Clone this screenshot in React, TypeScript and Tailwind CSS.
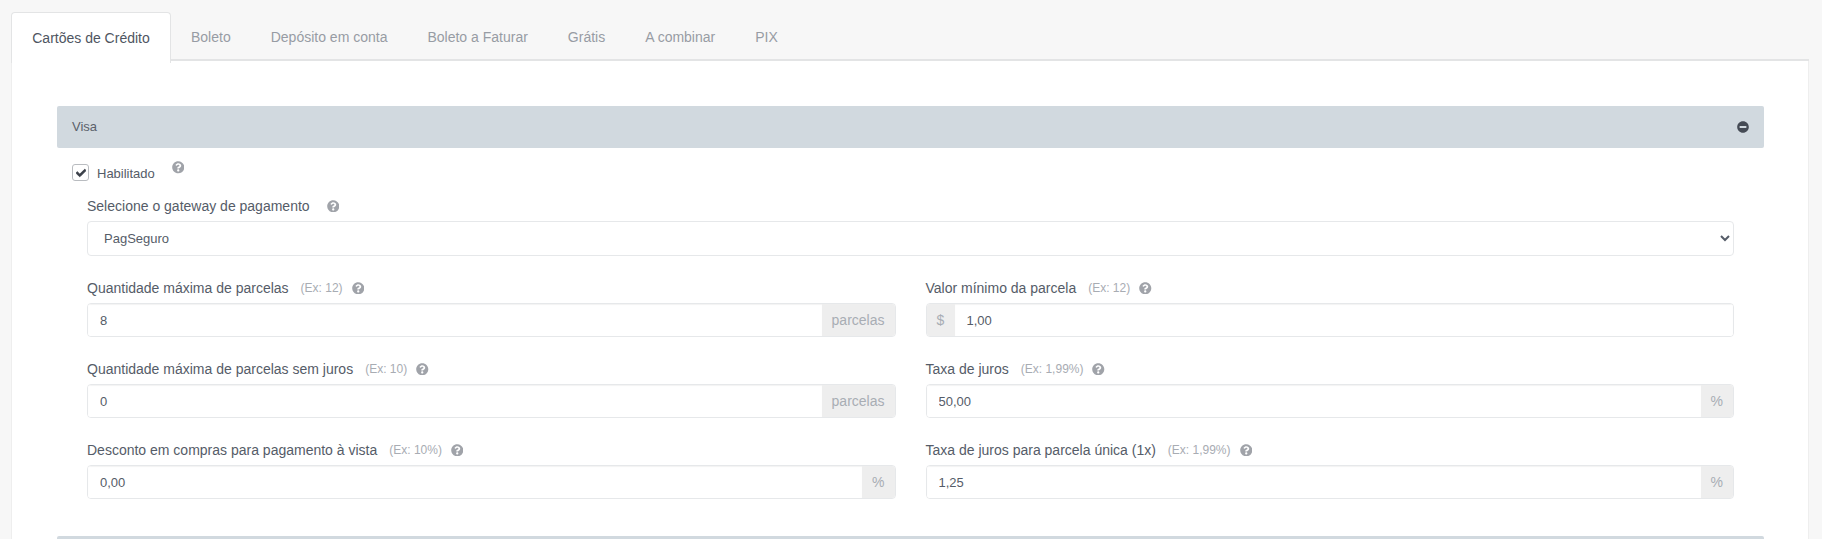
import { FaCheck, FaMinusCircle, FaQuestionCircle } from "react-icons/fa";

const tabs = ["Boleto", "Depósito em conta", "Boleto a Faturar", "Grátis", "A combinar", "PIX"];

function Help({ className = "" }: { className?: string }) {
  return <FaQuestionCircle className={"text-[12.5px] text-[#a0a3a9] shrink-0 " + className} />;
}

function Field({ label, hint, value, prefix, suffix }: { label: string; hint: string; value: string; prefix?: string; suffix?: string }) {
  return (
    <div className="flex flex-col">
      <div className="flex items-center h-[20px] mb-[5px] text-[14px] text-[#555c68]">
        <span>{label}</span>
        <span className="ml-[12px] text-[12px] text-[#a8acb3]">{hint}</span>
        <Help className="ml-[9px]" />
      </div>
      <div className="flex h-[34px] border border-[#e6e8ea] rounded-[4px] overflow-hidden text-[13px]">
        {prefix && <div className="flex items-center px-[10px] w-[28px] bg-[#eeeeee] text-[#a8adb4] text-[14px]">{prefix}</div>}
        <input readOnly value={value} className="flex-1 min-w-0 outline-none bg-white text-[#555c68] pl-[12px] pt-[2px] shadow-[inset_0_1px_1px_rgba(0,0,0,0.05)]" />
        {suffix && <div className="flex items-center px-[10px] bg-[#eeeeee] text-[#a8adb4] text-[14px]">{suffix}</div>}
      </div>
    </div>
  );
}

export default function App() {
  return (
    <div className="h-[539px] overflow-hidden bg-[#f7f7f7] pl-[11px] pr-[13px] pt-[12px] font-['Liberation_Sans',Arial,sans-serif]">
      <div className="flex h-[49px] text-[14px] text-[#979ca4] border-b-2 border-[#e3e4e5]">
        <div className="h-[51px] w-[160px] flex items-center justify-center bg-white border border-b-0 border-[#e3e4e5] rounded-t-[4px] text-[#4e5561] z-10">
          Cartões de Crédito
        </div>
        {tabs.map((t) => (
          <div key={t} className="px-[20px] pt-[4px] flex items-center">{t}</div>
        ))}
      </div>
      <div className="h-[478px] bg-white border-x border-[#eeeeee] pt-[45px] pl-[45px] pr-[44px] overflow-hidden">
        <div className="flex items-center justify-between h-[42px] bg-[#d1d9df] rounded-[2px] px-[15px] text-[13px] text-[#5b616b]">
          <span>Visa</span>
          <FaMinusCircle className="text-[12px] text-[#454b55]" />
        </div>
        <div className="flex items-start mt-[16px] ml-[15px] h-[20px]">
          <div className="flex items-center justify-center w-[17px] h-[17px] border border-[#b9bcc0] rounded-[3px] bg-white">
            <FaCheck className="text-[10px] text-[#3a3f48]" stroke="currentColor" strokeWidth={40} />
          </div>
          <span className="ml-[8px] text-[13px] text-[#555c68]">Habilitado</span>
          <Help className="ml-[17px] -mt-[3px]" />
        </div>
        <div className="mx-[30px] mt-[12px] flex flex-col">
          <div className="flex items-center h-[20px] mb-[5px] text-[14px] text-[#555c68]">
            <span>Selecione o gateway de pagamento</span>
            <Help className="ml-[17px]" />
          </div>
          <select className="h-[35px] w-full bg-white border border-[#e6e8ea] rounded-[4px] px-[12px] text-[13px] text-[#555c68] outline-none">
            <option>PagSeguro</option>
          </select>
          <div className="grid grid-cols-2 gap-x-[30px] gap-y-[22px] mt-[22px]">
            <Field label="Quantidade máxima de parcelas" hint="(Ex: 12)" value="8" suffix="parcelas" />
            <Field label="Valor mínimo da parcela" hint="(Ex: 12)" value="1,00" prefix="$" />
            <Field label="Quantidade máxima de parcelas sem juros" hint="(Ex: 10)" value="0" suffix="parcelas" />
            <Field label="Taxa de juros" hint="(Ex: 1,99%)" value="50,00" suffix="%" />
            <Field label="Desconto em compras para pagamento à vista" hint="(Ex: 10%)" value="0,00" suffix="%" />
            <Field label="Taxa de juros para parcela única (1x)" hint="(Ex: 1,99%)" value="1,25" suffix="%" />
          </div>
        </div>
        <div className="h-[42px] mt-[37px] bg-[#d1d9df] rounded-[2px]" />
      </div>
    </div>
  );
}
